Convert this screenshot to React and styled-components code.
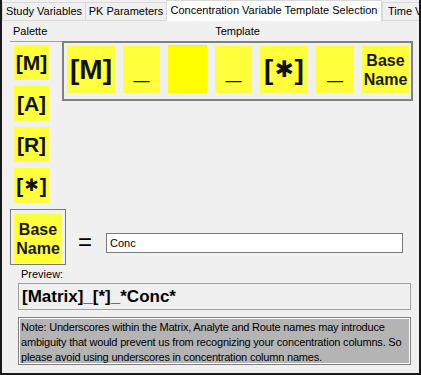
import React from "react";
import styled, { createGlobalStyle } from "styled-components";

const GlobalStyle = createGlobalStyle`
  html, body {
    margin: 0;
    padding: 0;
    background: #f0f0f0;
  }
  body {
    font-family: "Liberation Sans", Arial, sans-serif;
    color: #000;
  }
`;

const Window = styled.div`
  width: 421px;
  height: 375px;
  box-sizing: border-box;
  border-left: 2px solid #1a1a1a;
  border-right: 2px solid #1a1a1a;
  border-bottom: 2px solid #1a1a1a;
  background: #f0f0f0;
  display: flex;
  flex-direction: column;
  overflow: hidden;
`;

const TabStrip = styled.div`
  display: flex;
  align-items: flex-end;
  height: 21px;
  flex-shrink: 0;
  overflow: hidden;
`;

const Tab = styled.div`
  box-sizing: border-box;
  flex-shrink: 0;
  display: flex;
  align-items: center;
  justify-content: ${(p) => (p.$width ? "center" : "flex-start")};
  width: ${(p) => (p.$width ? `${p.$width}px` : "auto")};
  padding-left: ${(p) => (p.$width ? 0 : 5)}px;
  white-space: nowrap;
  font-size: 11px;
  height: ${(p) => (p.$selected ? 21 : 19)}px;
  padding-bottom: ${(p) => (p.$selected ? 2 : 1)}px;
  background: ${(p) => (p.$selected ? "#ffffff" : "#f0f0f0")};
  border: 1px solid #d9d9d9;
  border-right: ${(p) => (p.$selected ? "1px solid #d9d9d9" : "none")};
  border-bottom: ${(p) => (p.$selected ? "none" : "1px solid #d9d9d9")};
`;

const Panel = styled.div`
  flex: 1;
  display: flex;
  flex-direction: column;
  padding: 0 6px 0 8px;
`;

const TopGrid = styled.div`
  display: grid;
  grid-template-columns: 52px 351px;
  grid-template-rows: 20px auto;
`;

const Label = styled.div`
  font-size: 11px;
  display: flex;
  align-items: center;
  justify-content: ${(p) => (p.$center ? "center" : "flex-start")};
  padding-left: ${(p) => (p.$center ? 0 : 3)}px;
`;

const Palette = styled.div`
  width: 48px;
  border-top: 1px solid #a0a0a0;
  padding: 3px 0 0 4px;
  display: flex;
  flex-direction: column;
  gap: 6px;
`;

const Chip = styled.div`
  box-sizing: border-box;
  display: flex;
  align-items: center;
  justify-content: center;
  background: ${(p) => (p.$pure ? "#ffff00" : "#ffff3c")};
  color: #111;
  font-weight: bold;
  line-height: 1;
  white-space: nowrap;
`;

const PaletteChip = styled(Chip)`
  width: 35px;
  height: 35px;
  font-size: 21px;
`;

const TemplateBox = styled.div`
  box-sizing: border-box;
  height: 60px;
  border: 2px solid #808080;
  padding: 3px;
  display: flex;
  gap: 8px;
  align-items: flex-start;
`;

const TemplateChip = styled(Chip)`
  width: ${(p) => p.$w}px;
  font-size: 28px;
  flex-shrink: 0;
  border-top: ${(p) => (p.$pure ? "1px solid #d4d4d4" : "none")};
  margin-top: ${(p) => (p.$pure ? -1 : 0)}px;
  height: ${(p) => (p.$pure ? 48 : 47)}px;
`;

const NameText = styled.span`
  font-size: 16px;
  line-height: 19px;
  text-align: center;
  white-space: normal;
  color: #1a1a1a;
`;

const Star = styled.span`
  font-family: "DejaVu Sans", sans-serif;
  font-size: 0.82em;
  margin: 0 1px;
`;

const BaseRow = styled.div`
  display: flex;
  align-items: flex-start;
  margin-top: 6px;
`;

const BaseBox = styled.div`
  box-sizing: border-box;
  width: 56px;
  height: 56px;
  border: 1px solid #7a7a7a;
  padding: 4px 3px 1px 3px;
  display: flex;
`;

const BaseChip = styled(Chip)`
  flex: 1;
`;

const Equals = styled.div`
  font-size: 24px;
  line-height: 24px;
  margin: 21px 0 0 12px;
`;

const TextInput = styled.input`
  box-sizing: border-box;
  width: 297px;
  height: 20px;
  margin: 24px 0 0 14px;
  border: 1px solid #7a7a7a;
  background: #fff;
  font-family: "Liberation Sans", Arial, sans-serif;
  font-size: 11px;
  padding: 0 3px;
  outline: none;
`;

const PreviewLabel = styled.div`
  font-size: 11px;
  line-height: 16px;
  margin: 1px 0 0 11px;
`;

const PreviewBox = styled.div`
  box-sizing: border-box;
  width: 393px;
  height: 27px;
  margin: 1px 0 0 8px;
  border: 1px solid #a0a0a0;
  padding-left: 3px;
  display: flex;
  align-items: center;
  font-size: 17px;
  font-weight: bold;
`;

const NoteBox = styled.div`
  box-sizing: border-box;
  width: 393px;
  height: 48px;
  margin: 7px 0 0 8px;
  border: 1px solid #808080;
  box-shadow: inset 0 0 0 1px #ffffff;
  background: #b4b4b4;
  padding: 2px 2px 0 2px;
  font-size: 11px;
  line-height: 15px;
  letter-spacing: -0.2px;
`;

const BaseName = () => (
  <NameText>
    Base
    <br />
    Name
  </NameText>
);

const template = [
  { w: 48, content: "[M]" },
  { w: 37, content: "_" },
  { w: 39, content: "", pure: true },
  { w: 37, content: "_" },
  { w: 48, content: "star" },
  { w: 38, content: "_" },
  { w: 47, content: "name" },
];

const renderContent = (c) => {
  if (c === "star")
    return (
      <>
        [<Star>✱</Star>]
      </>
    );
  if (c === "name") return <BaseName />;
  return c;
};

export default function App() {
  return (
    <>
      <GlobalStyle />
      <Window>
        <TabStrip>
          <Tab $width={83}>Study Variables</Tab>
          <Tab $width={81}>PK Parameters</Tab>
          <Tab $width={216} $selected>
            Concentration Variable Template Selection
          </Tab>
          <Tab>Time Variables</Tab>
        </TabStrip>
        <Panel>
          <TopGrid>
            <Label>Palette</Label>
            <Label $center>Template</Label>
            <Palette>
              <PaletteChip>[M]</PaletteChip>
              <PaletteChip>[A]</PaletteChip>
              <PaletteChip>[R]</PaletteChip>
              <PaletteChip>{renderContent("star")}</PaletteChip>
            </Palette>
            <div>
              <TemplateBox>
                {template.map((t, i) => (
                  <TemplateChip key={i} $w={t.w} $pure={t.pure}>
                    {renderContent(t.content)}
                  </TemplateChip>
                ))}
              </TemplateBox>
            </div>
          </TopGrid>
          <BaseRow>
            <BaseBox>
              <BaseChip>
                <BaseName />
              </BaseChip>
            </BaseBox>
            <Equals>=</Equals>
            <TextInput defaultValue="Conc" readOnly />
          </BaseRow>
          <PreviewLabel>Preview:</PreviewLabel>
          <PreviewBox>[Matrix]_[*]_*Conc*</PreviewBox>
          <NoteBox>
            Note: Underscores within the Matrix, Analyte and Route names may
            introduce ambiguity that would prevent us from recognizing your
            concentration columns. So please avoid using underscores in
            concentration column names.
          </NoteBox>
        </Panel>
      </Window>
    </>
  );
}
